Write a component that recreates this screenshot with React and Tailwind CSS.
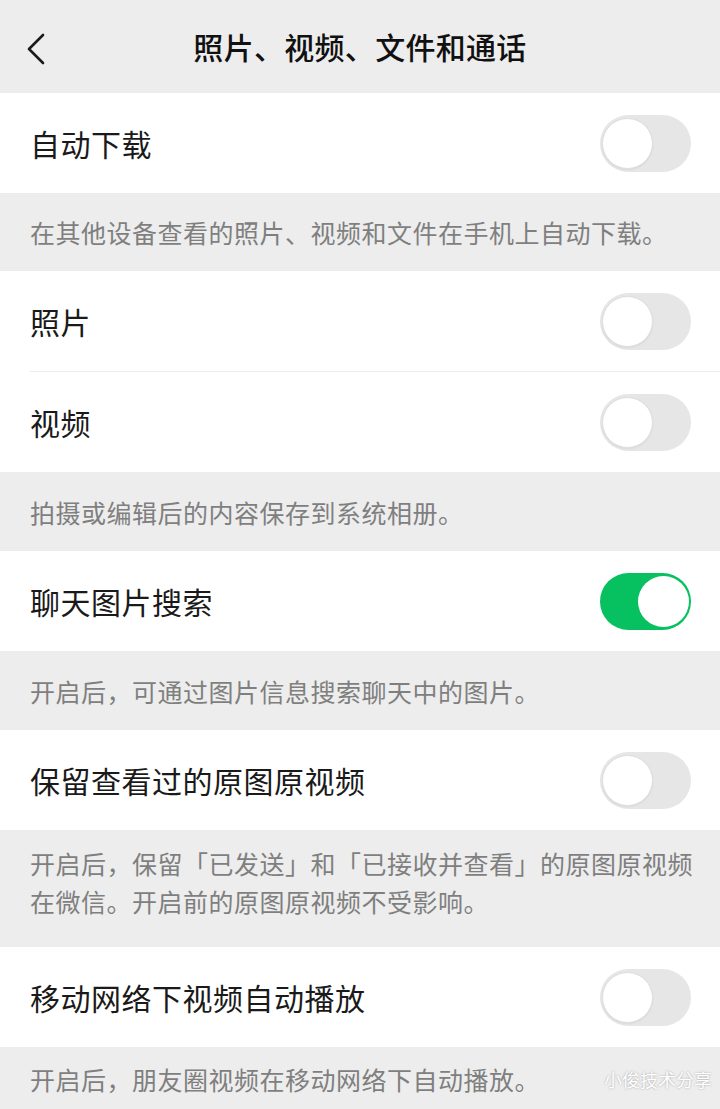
import React, { useState } from 'react';

const Toggle = ({ on, onClick }) => (
    <button
        onClick={onClick}
        className={`relative w-[91px] h-[57px] rounded-full shrink-0 ${on ? 'bg-[#07c160]' : 'bg-[#e6e6e6]'}`}
    >
        <span
            className={`absolute top-[3px] w-[51px] h-[51px] rounded-full bg-white ${on ? 'right-[2px]' : 'left-[2px] border border-[#dedede] shadow-[0_1px_2px_rgba(0,0,0,0.06)]'}`}
        />
    </button>
);

const Row = ({ label, on, onToggle, divider }) => (
    <div className="bg-white pl-[30px]">
        <div className={`flex items-center justify-between pr-[29px] ${divider ? 'h-[101px] border-b border-[#ececec]' : 'h-[100px]'}`}>
            <span className="text-[30px] tracking-[0.5px] text-[#1a1a1a]">{label}</span>
            <Toggle on={on} onClick={onToggle} />
        </div>
    </div>
);

const Desc = ({ children, wide, className = '' }) => (
    <div className={`pl-[30px] ${wide ? 'pr-[14px]' : 'pr-[30px]'} text-[25px] tracking-[0.5px] leading-[38px] text-[#7f7f7f] ${className}`}>{children}</div>
);

const App = () => {
    const [state, setState] = useState({ auto: false, photo: false, video: false, search: true, keep: false, play: false });
    const flip = (k) => () => setState({ ...state, [k]: !state[k] });

    return (
        <div
            className="w-[720px] h-[1109px] overflow-hidden bg-[#ededed] relative"
            style={{ fontFamily: '"Noto Sans CJK SC", "Noto Sans", sans-serif' }}
        >
            <div className="h-[93px] flex items-center justify-center relative">
                <svg className="absolute left-[26px] top-[33px]" width="20" height="32" viewBox="0 0 20 32" fill="none">
                    <path d="M17 2 L3 16 L17 30" stroke="#1a1a1a" strokeWidth="2.6" strokeLinecap="round" strokeLinejoin="round" />
                </svg>
                <h1 className="text-[30px] font-medium tracking-[0.3px] text-[#111]">照片、视频、文件和通话</h1>
            </div>

            <Row label="自动下载" on={state.auto} onToggle={flip('auto')} />
            <Desc className="h-[78px] flex items-center">在其他设备查看的照片、视频和文件在手机上自动下载。</Desc>

            <Row label="照片" on={state.photo} onToggle={flip('photo')} divider />
            <Row label="视频" on={state.video} onToggle={flip('video')} />
            <Desc className="h-[79px] flex items-center">拍摄或编辑后的内容保存到系统相册。</Desc>

            <Row label="聊天图片搜索" on={state.search} onToggle={flip('search')} />
            <Desc className="h-[79px] flex items-center">开启后，可通过图片信息搜索聊天中的图片。</Desc>

            <Row label="保留查看过的原图原视频" on={state.keep} onToggle={flip('keep')} />
            <Desc wide className="h-[117px] pt-[14px]">
                开启后，保留「已发送」和「已接收并查看」的原图原视频在微信。开启前的原图原视频不受影响。
            </Desc>

            <Row label="移动网络下视频自动播放" on={state.play} onToggle={flip('play')} />
            <Desc className="h-[63px] flex items-center">开启后，朋友圈视频在移动网络下自动播放。</Desc>

            <span className="absolute right-[8px] bottom-[16px] text-[18px] text-white [text-shadow:0_0_2px_rgba(0,0,0,0.35)]">小俊技术分享</span>
        </div>
    );
};

export default App;
